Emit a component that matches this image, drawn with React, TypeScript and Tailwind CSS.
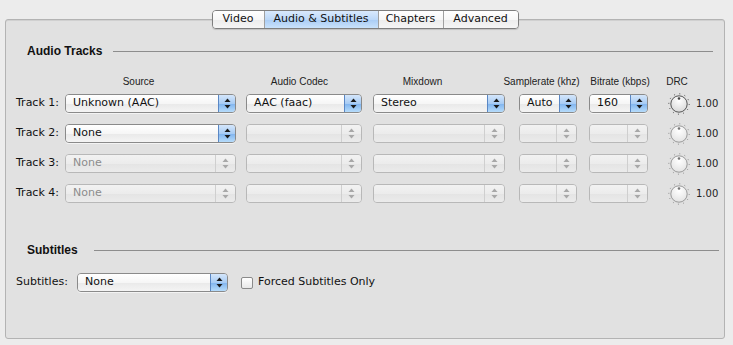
import { FunctionComponent } from "react";

const FONT = { fontFamily: '"DejaVu Sans", "Liberation Sans", sans-serif' };
const ARIAL = { fontFamily: '"Liberation Sans", Arial, sans-serif' };

interface PopupProps {
  width: number;
  value?: string;
  enabled: boolean;
  dim?: boolean;
}

const Arrows: FunctionComponent<{ color: string }> = ({ color }) => (
  <svg width="7" height="11" viewBox="0 0 7 11">
    <path d="M3.5 0.5 L6.5 4 L0.5 4 Z" fill={color} />
    <path d="M3.5 10.5 L6.5 7 L0.5 7 Z" fill={color} />
  </svg>
);

const Popup: FunctionComponent<PopupProps> = ({ width, value, enabled, dim }) => {
  if (enabled) {
    return (
      <div
        className="h-[19px] flex rounded-[4px] border border-[#8a8a8a] overflow-hidden shadow-[0_1px_0_rgba(255,255,255,0.6)]"
        style={{ width }}
      >
        <div className="flex-1 flex items-center pl-[7px] text-[11px] text-[#111] bg-[linear-gradient(#ffffff,#f6f6f6_50%,#e9e9e9_51%,#f4f4f4)]">
          {value}
        </div>
        <div className="w-[17px] flex items-center justify-center border-l border-[#5a87c4] bg-[linear-gradient(#d4e6fb,#a8ccf4_50%,#7fb3ee_51%,#b6dcfb)]">
          <Arrows color="#1a1a1a" />
        </div>
      </div>
    );
  }
  return (
    <div
      className="h-[19px] flex rounded-[4px] border border-[#b8b8b8] overflow-hidden"
      style={{ width }}
    >
      <div
        className={`flex-1 flex items-center pl-[7px] text-[11px] bg-[linear-gradient(#f2f2f2,#ececec_50%,#e4e4e4_51%,#ebebeb)] ${
          dim ? "text-[#8c8c8c]" : ""
        }`}
      >
        {value}
      </div>
      <div className="w-[20px] flex items-center justify-center border-l border-[#cfcfcf] bg-[linear-gradient(#f2f2f2,#ececec_50%,#e4e4e4_51%,#ebebeb)]">
        <Arrows color="#a8a8a8" />
      </div>
    </div>
  );
};

const Knob: FunctionComponent<{ enabled: boolean }> = ({ enabled }) => (
  <svg width="22" height="22" viewBox="0 0 22 22">
    <defs>
      <radialGradient id={enabled ? "kE" : "kD"} cx="50%" cy="30%" r="70%">
        <stop offset="0%" stopColor="#ffffff" />
        <stop offset="100%" stopColor={enabled ? "#d8d8d8" : "#e2e2e2"} />
      </radialGradient>
    </defs>
    <circle
      cx="11"
      cy="11"
      r="10.2"
      fill="none"
      stroke={enabled ? "#444" : "#8a8a8a"}
      strokeWidth="1"
      strokeDasharray="1 4.34"
    />
    <circle
      cx="11"
      cy="11"
      r="8.2"
      fill={`url(#${enabled ? "kE" : "kD"})`}
      stroke={enabled ? "#555" : "#9a9a9a"}
      strokeWidth="1"
    />
    <circle cx="11" cy="5.5" r="1.3" fill={enabled ? "#444" : "#777"} />
  </svg>
);

const SectionHeader: FunctionComponent<{ title: string; gap: string; right: string }> = ({
  title,
  gap,
  right,
}) => (
  <div className={`flex items-center pl-[21px] ${right}`}>
    <span className="text-[12px] font-bold text-[#111]" style={ARIAL}>
      {title}
    </span>
    <div className={`flex-1 h-px bg-[#8d8d8d] ${gap}`}></div>
  </div>
);

interface TrackI {
  label: string;
  source: string;
  codec: string;
  mixdown: string;
  rate: string;
  bitrate: string;
  enabled: boolean;
  sourceEnabled: boolean;
}

const tracks: TrackI[] = [
  { label: "Track 1:", source: "Unknown (AAC)", codec: "AAC (faac)", mixdown: "Stereo", rate: "Auto", bitrate: "160", enabled: true, sourceEnabled: true },
  { label: "Track 2:", source: "None", codec: "", mixdown: "", rate: "", bitrate: "", enabled: false, sourceEnabled: true },
  { label: "Track 3:", source: "None", codec: "", mixdown: "", rate: "", bitrate: "", enabled: false, sourceEnabled: false },
  { label: "Track 4:", source: "None", codec: "", mixdown: "", rate: "", bitrate: "", enabled: false, sourceEnabled: false },
];

const tabs = [
  { name: "Video", w: 51 },
  { name: "Audio & Subtitles", w: 114 },
  { name: "Chapters", w: 65 },
  { name: "Advanced", w: 75 },
];

const App: FunctionComponent = () => {
  return (
    <div className="w-[733px] h-[345px] bg-[#ececec] pt-[19px] pl-[5px] text-[#111]" style={FONT}>
      <div className="w-[720px] h-[320px] border border-[#b3b3b3] rounded-[3px] bg-[#e1e1e1] shadow-[inset_0_1px_0_#d0d0d0]">
        <div className="flex justify-center -mt-[10px]">
          <div className="flex h-[19px] rounded-[4px] border border-[#7e7e7e] overflow-hidden shadow-[0_1px_1px_rgba(0,0,0,0.15)]">
            {tabs.map((tab, idx) => (
              <div
                key={tab.name}
                className={`flex items-center justify-center text-[11px] ${
                  idx > 0 ? "border-l border-[#a0a0a0]" : ""
                } ${
                  idx === 1
                    ? "bg-[linear-gradient(#d9e9fc,#bcd8f8_50%,#a9ccf5_51%,#c9e2fb)]"
                    : "bg-[linear-gradient(#ffffff,#f7f7f7_50%,#ececec_51%,#f5f5f5)]"
                }`}
                style={{ width: tab.w }}
              >
                {tab.name}
              </div>
            ))}
          </div>
        </div>

        <div className="mt-[13px]">
          <SectionHeader title="Audio Tracks" gap="ml-[11px]" right="pr-[11px]" />
        </div>

        <div
          className="mt-[15px] flex items-center h-[12px] text-[10px] text-[#222] pl-[92px] whitespace-nowrap"
          style={ARIAL}
        >
          <div className="w-[81px] text-center">Source</div>
          <div className="w-[79px] ml-[81px] text-center">Audio Codec</div>
          <div className="w-[81px] ml-[43px] text-center">Mixdown</div>
          <div className="w-[77px] ml-[40px] text-center">Samplerate (khz)</div>
          <div className="w-[76px] ml-[2px] text-center">Bitrate (kbps)</div>
          <div className="w-[34px] ml-[2px] text-center">DRC</div>
        </div>

        <div className="mt-[7px] flex flex-col gap-[11px] pl-[10px]">
          {tracks.map((track) => (
            <div key={track.label} className="flex items-center h-[19px]">
              <div className="w-[49px] text-[11px]">{track.label}</div>
              <Popup width={171} value={track.source} enabled={track.sourceEnabled} dim={!track.sourceEnabled} />
              <div className="ml-[10px]">
                <Popup width={116} value={track.codec} enabled={track.enabled} />
              </div>
              <div className="ml-[11px]">
                <Popup width={132} value={track.mixdown} enabled={track.enabled} />
              </div>
              <div className="ml-[14px]">
                <Popup width={58} value={track.rate} enabled={track.enabled} />
              </div>
              <div className="ml-[12px]">
                <Popup width={59} value={track.bitrate} enabled={track.enabled} />
              </div>
              <div className="ml-[20px] flex items-center">
                <Knob enabled={track.enabled} />
                <span className="ml-[6px] text-[10px] text-[#222]">1.00</span>
              </div>
            </div>
          ))}
        </div>

        <div className="mt-[38px]">
          <SectionHeader title="Subtitles" gap="ml-[16px]" right="pr-[5px]" />
        </div>

        <div className="mt-[14px] flex items-center pl-[10px] h-[19px]">
          <div className="w-[61px] text-[11px]">Subtitles:</div>
          <Popup width={151} value="None" enabled={true} />
          <div className="ml-[13px] w-[12px] h-[12px] border border-[#8a8a8a] rounded-[2px] bg-[linear-gradient(#ffffff,#e8e8e8)]"></div>
          <span className="ml-[5px] text-[11px]">Forced Subtitles Only</span>
        </div>
      </div>
    </div>
  );
};

export default App;
